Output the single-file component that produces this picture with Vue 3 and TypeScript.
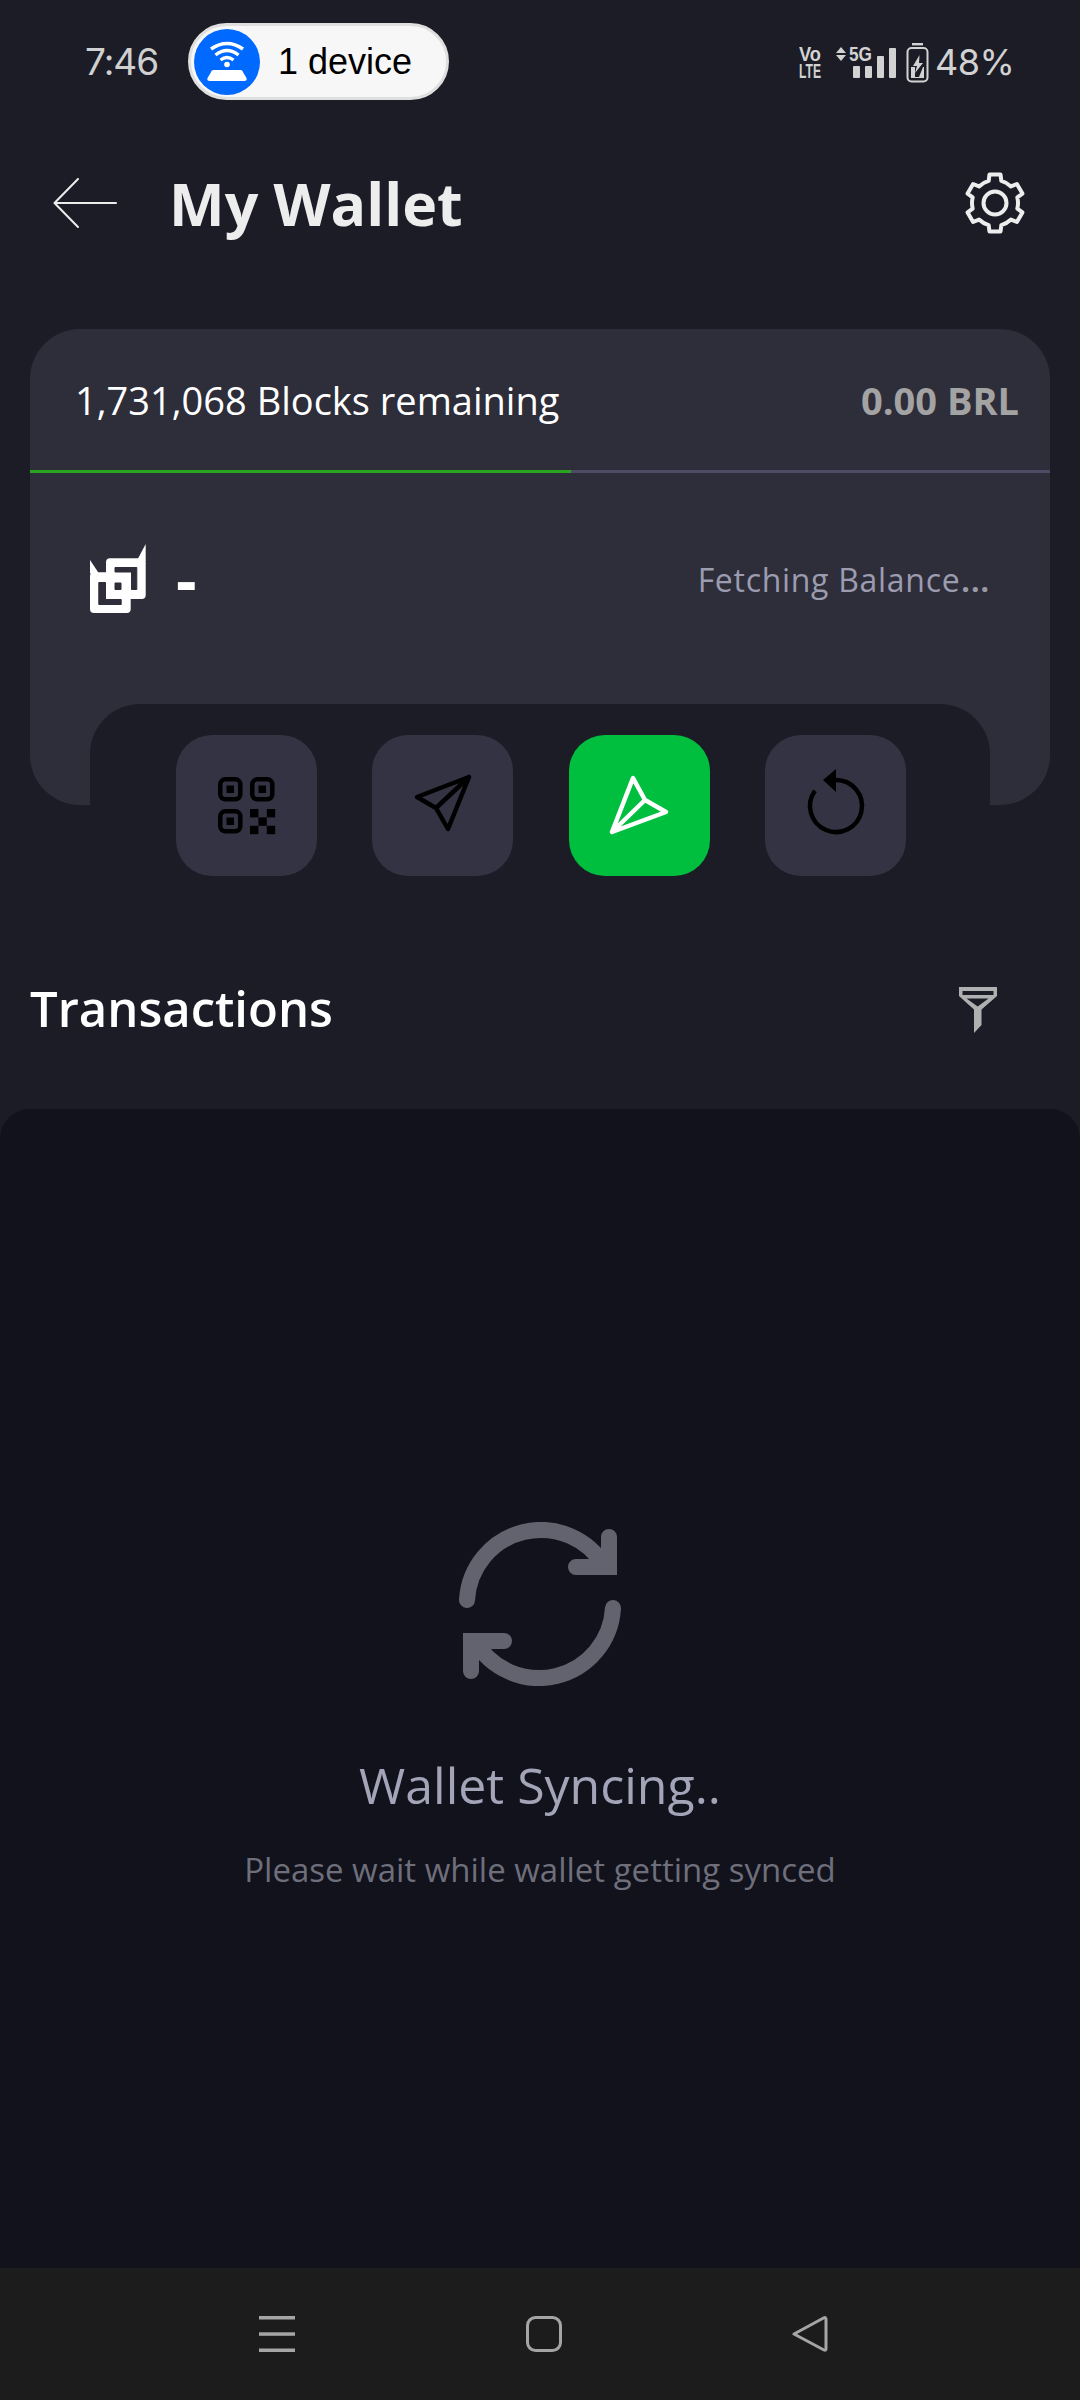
<script setup lang="ts">
function gearPath(cx: number, cy: number): string {
  const pts: string[] = []
  const p = (r: number, deg: number) => {
    const a = (deg * Math.PI) / 180
    return `${(cx + r * Math.cos(a)).toFixed(2)} ${(cy + r * Math.sin(a)).toFixed(2)}`
  }
  for (let i = 0; i < 6; i++) {
    const c = -90 + 60 * i
    pts.push(`${i === 0 ? 'M' : 'L'}${p(23, c - 16)}`)
    pts.push(`L${p(29, c - 11)}`)
    pts.push(`L${p(29, c + 11)}`)
    pts.push(`L${p(23, c + 16)}`)
    pts.push(`A23 23 0 0 1 ${p(23, c + 44)}`)
  }
  return pts.join(' ') + ' Z'
}
const gear = gearPath(31, 31)
const progress = 53
</script>

<template>
  <div class="screen">
    <div class="status">
      <div class="status-left">
        <span class="time">7:46</span>
        <div class="pill">
          <span class="pill-icon">
            <svg width="66" height="66" viewBox="0 0 66 66" fill="none">
              <path d="M17 20 Q33 9 49 20" stroke="#fff" stroke-width="3.6" />
              <path d="M21.500 26 Q33 17 44.500 26" stroke="#fff" stroke-width="3.4" />
              <path d="M26.500 31 Q33 26 39.500 31" stroke="#fff" stroke-width="3.2" />
              <circle cx="33" cy="35.500" r="2.800" fill="#fff" />
              <path d="M19 41 H47 Q48.500 41 49.500 44 L52.500 49 Q53.500 52 50 52 H16 Q12.500 52 13.500 49 L16.500 44 Q17.500 41 19 41 Z" fill="#fff" />
            </svg>
          </span>
          <span class="pill-text">1 device</span>
        </div>
      </div>
      <div class="status-right">
        <svg class="sys" width="130" height="42" viewBox="0 0 130 42">
          <text x="0" y="20" class="sys-text" textLength="22" lengthAdjust="spacingAndGlyphs">Vo</text>
          <text x="0" y="37" class="sys-text" textLength="22" lengthAdjust="spacingAndGlyphs">LTE</text>
          <path d="M42 6 L47 12 H37 Z M42 20 L47 14 H37 Z" fill="#d2d2d2" />
          <text x="50" y="20" class="sys-text" textLength="23" lengthAdjust="spacingAndGlyphs">5G</text>
          <rect x="54" y="25" width="7" height="12" rx="1" fill="#d2d2d2" />
          <rect x="66" y="25" width="7" height="12" rx="1" fill="#d2d2d2" />
          <rect x="78" y="15" width="7" height="22" rx="1" fill="#d2d2d2" />
          <rect x="90" y="7" width="7" height="30" rx="1" fill="#d2d2d2" />
          <rect x="113" y="2" width="11" height="2.400" fill="#d2d2d2" />
          <rect x="108.500" y="7" width="20" height="33.500" rx="4" fill="none" stroke="#d2d2d2" stroke-width="2" />
          <path d="M120.500 14 L114 25 H118 L116 32 L124 22 H120 Z" fill="#d2d2d2" />
          <path d="M112 26 V37 H125 V26 H124 L120 36 H116 V26 Z" fill="#d2d2d2" />
        </svg>
        <span class="battery">48%</span>
      </div>
    </div>

    <header class="header">
      <div class="header-left">
        <svg class="back" width="64" height="50" viewBox="0 0 64 50" fill="none">
          <path d="M63 25 H2 M25 1 L1.500 25 L25 49" stroke="#ececec" stroke-width="2" stroke-linecap="round" stroke-linejoin="round" />
        </svg>
        <h1 class="title">My Wallet</h1>
      </div>
      <svg class="gear" width="62" height="62" viewBox="0 0 62 62" fill="none">
        <path :d="gear" stroke="#ededed" stroke-width="4" stroke-linejoin="round" />
        <circle cx="31" cy="31" r="11.500" stroke="#ededed" stroke-width="4" />
      </svg>
    </header>

    <section class="card">
      <div class="card-top">
        <span class="blocks">1,731,068 Blocks remaining</span>
        <span class="fiat">0.00 BRL</span>
      </div>
      <div class="progress">
        <div class="progress-fill" :style="{ width: progress + '%' }"></div>
      </div>
      <div class="card-body">
        <div class="coin">
          <svg width="56" height="70" viewBox="0 0 56 70">
            <g fill="#fff">
              <rect x="0" y="28.300" width="40.700" height="40.700" rx="4" />
              <rect x="16" y="14.300" width="39.700" height="40.700" rx="4" />
              <path d="M0 16 L9 29.500 H0 Z" />
              <path d="M55.700 0 V17 H46.700 Z" />
            </g>
            <g fill="#2e2d3a" stroke="#2e2d3a" stroke-width="1" stroke-linejoin="round">
              <path d="M25 23.500 H46.800 V45.500 H41.500 V28 H25 Z" />
              <path d="M8.800 38.500 H15.500 V55.500 H31.200 V60.500 H8.800 Z" />
              <path d="M25 39 H31 V45.500 H25 Z" />
            </g>
          </svg>
          <span class="dash">-</span>
        </div>
        <div class="fetching">Fetching Balance<span class="dots">...</span></div>
      </div>
      <div class="tray">
        <button class="action" type="button">
          <svg width="141" height="141" viewBox="0 0 141 141" fill="none">
            <g stroke="#000" stroke-width="4.500">
              <rect x="44.300" y="44.300" width="20" height="20" rx="5" />
              <rect x="76.300" y="44.300" width="20" height="20" rx="5" />
              <rect x="44.300" y="76.300" width="20" height="20" rx="5" />
            </g>
            <g fill="#000">
              <rect x="50.500" y="50.500" width="7.500" height="7.500" />
              <rect x="82.500" y="50.500" width="7.500" height="7.500" />
              <rect x="50.500" y="82.500" width="7.500" height="7.500" />
              <rect x="74" y="74" width="8.400" height="8.400" />
              <rect x="90.800" y="74" width="8.400" height="8.400" />
              <rect x="82.400" y="82.400" width="8.400" height="8.400" />
              <rect x="74" y="90.800" width="8.400" height="8.400" />
              <rect x="90.800" y="90.800" width="8.400" height="8.400" />
            </g>
          </svg>
        </button>
        <button class="action" type="button">
          <svg width="141" height="141" viewBox="0 0 141 141" fill="none">
            <path d="M97 42 L45 62 L64 73 L76 94 Z M97 42 L64 73" stroke="#000" stroke-width="4.500" stroke-linejoin="round" stroke-linecap="round" />
          </svg>
        </button>
        <button class="action action-primary" type="button">
          <svg width="141" height="141" viewBox="0 0 141 141" fill="none">
            <path d="M43 97 L64 43 L76 65 L97 77 Z M43 97 L76 65" stroke="#fff" stroke-width="4.500" stroke-linejoin="round" stroke-linecap="round" />
          </svg>
        </button>
        <button class="action" type="button">
          <svg width="141" height="141" viewBox="0 0 141 141" fill="none">
            <path d="M71 45 A26 26 0 1 1 50 55.700" stroke="#000" stroke-width="4.500" />
            <path d="M71 34 V57 L58 45 Z" fill="#000" />
          </svg>
        </button>
      </div>
    </section>

    <div class="tx-head">
      <h2 class="tx-title">Transactions</h2>
      <svg class="filter" width="38" height="46" viewBox="0 0 38 46">
        <path fill="#b0b0b0" fill-rule="evenodd" d="M0 0 H38 V9 L22.500 22.500 V38 L15 46 V22.500 L0 9 Z M3.500 4 V8 H34.500 V4 Z M7.500 11.500 L18.700 19.500 L29.500 11.500 Z" />
      </svg>
    </div>

    <main class="panel">
      <svg class="sync" width="164" height="164" viewBox="0 0 164 164" fill="none">
        <g stroke="#62636e" stroke-width="16" stroke-linecap="round">
          <path d="M9 78 A74 74 0 0 1 147 45" />
          <path d="M151 15 V45 H118" stroke-linejoin="miter" />
          <path d="M155 86 A74 74 0 0 1 17 119" />
          <path d="M13 149 V119 H46" stroke-linejoin="miter" />
        </g>
      </svg>
      <h3 class="sync-title">Wallet Syncing..</h3>
      <p class="sync-sub">Please wait while wallet getting synced</p>
    </main>

    <nav class="nav">
      <svg width="36" height="36" viewBox="0 0 36 36" fill="#a5a5a5">
        <rect x="0" y="0" width="36" height="3.500" />
        <rect x="0" y="16.300" width="36" height="3.500" />
        <rect x="0" y="32.500" width="36" height="3.500" />
      </svg>
      <svg width="36" height="36" viewBox="0 0 36 36" fill="none">
        <rect x="1.500" y="1.500" width="33" height="33" rx="8" stroke="#a5a5a5" stroke-width="3" />
      </svg>
      <svg width="36" height="36" viewBox="0 0 36 36" fill="none">
        <path d="M2 18 L32 1.800 Q34 1 34 3.500 V32.500 Q34 35 32 34 L2 18 Z" stroke="#a5a5a5" stroke-width="3" stroke-linejoin="round" />
      </svg>
    </nav>
  </div>
</template>

<style>
html,
body {
  margin: 0;
  background: #1c1c27;
}
</style>

<style scoped>
.screen {
  width: 1080px;
  height: 2400px;
  display: flex;
  flex-direction: column;
  background: #1c1c27;
  font-family: "Open Sans", sans-serif;
  overflow: hidden;
}
.status {
  height: 77px;
  margin-top: 23px;
  padding: 0 67px 0 85px;
  display: flex;
  align-items: center;
  justify-content: space-between;
  font-family: Inter, "Liberation Sans", sans-serif;
  flex-shrink: 0;
}
.status-left {
  display: flex;
  align-items: center;
  gap: 30px;
}
.time {
  font-size: 37px;
  color: #d0d0d0;
  width: 73px;
  letter-spacing: -1px;
}
.pill {
  width: 261px;
  height: 77px;
  box-sizing: border-box;
  border: 3px solid #dfdfdf;
  border-radius: 39px;
  background: #f7f7f7;
  display: flex;
  align-items: center;
  padding-left: 3px;
  gap: 18px;
}
.pill-icon {
  width: 66px;
  height: 66px;
  border-radius: 50%;
  background: #0069ff;
  display: block;
}
.pill-icon svg {
  display: block;
}
.pill-text {
  font-size: 36px;
  color: #000;
  font-family: "Liberation Sans", Arial, sans-serif;
}
.status-right {
  display: flex;
  align-items: center;
  gap: 6px;
}
.sys {
  display: block;
}
.sys-text {
  font-family: "Liberation Sans", Arial, sans-serif;
  font-weight: 700;
  font-size: 20px;
  fill: #d2d2d2;
}
.battery {
  font-size: 36px;
  color: #d2d2d2;
  width: 78px;
  white-space: nowrap;
  letter-spacing: -0.5px;
}
.header {
  height: 206px;
  padding: 0 54px 0 53px;
  display: flex;
  align-items: center;
  justify-content: space-between;
  flex-shrink: 0;
}
.header-left {
  display: flex;
  align-items: center;
  gap: 52px;
}
.back,
.gear {
  display: block;
}
.title {
  margin: 0;
  font-size: 59px;
  font-weight: 700;
  color: #ededed;
  line-height: 80px;
}
.card {
  margin: 23px 30px 0;
  height: 476px;
  display: flex;
  flex-direction: column;
  background: #2e2d3a;
  border-radius: 50px;
  flex-shrink: 0;
}
.card-top {
  height: 141px;
  padding: 0 31px 0 45px;
  display: flex;
  align-items: center;
  justify-content: space-between;
}
.blocks {
  font-size: 38px;
  color: #fff;
}
.fiat {
  font-size: 38px;
  font-weight: 700;
  color: #a3a3a3;
}
.progress {
  height: 3px;
  background: #4e4b66;
}
.progress-fill {
  height: 100%;
  background: #2aa320;
}
.card-body {
  flex: 1;
  display: flex;
  align-items: center;
  justify-content: space-between;
  padding: 0 60px 20px 60px;
}
.coin {
  display: flex;
  align-items: center;
  gap: 30px;
}
.coin svg {
  display: block;
}
.dash {
  font-size: 64px;
  font-weight: 700;
  color: #fff;
  line-height: 70px;
}
.fetching {
  font-size: 32px;
  color: #9c9cb0;
  letter-spacing: 0.7px;
  margin-top: 2px;
}
.dots {
  font-weight: 700;
  font-size: 30px;
  color: #9a9aa6;
  letter-spacing: 1px;
  margin-left: 1px;
}
.tray {
  height: 101px;
  margin: 0 60px;
  padding: 31px 84px 0 86px;
  box-sizing: border-box;
  display: flex;
  justify-content: space-between;
  align-items: flex-start;
  background: #1c1c27;
  border-radius: 50px 50px 0 0;
}
.action {
  width: 141px;
  height: 141px;
  padding: 0;
  border: 0;
  border-radius: 36px;
  background: #343343;
  flex-shrink: 0;
}
.action svg {
  display: block;
}
.action-primary {
  background: #00bf3f;
}
.tx-head {
  margin-top: 106px;
  height: 198px;
  padding: 0 83px 4px 30px;
  box-sizing: border-box;
  display: flex;
  align-items: center;
  justify-content: space-between;
  flex-shrink: 0;
}
.tx-title {
  margin: 0;
  font-size: 49px;
  font-weight: 600;
  color: #fff;
}
.filter {
  display: block;
  margin-top: 4px;
}
.panel {
  flex: 1;
  display: flex;
  flex-direction: column;
  align-items: center;
  padding-top: 413px;
  background: #11121b;
  border-radius: 30px 30px 0 0;
}
.sync {
  display: block;
}
.sync-title {
  margin: 65px 0 0;
  font-size: 50px;
  line-height: 68px;
  font-weight: 400;
  color: #a4a4b8;
}
.sync-sub {
  margin: 29px 0 0;
  font-size: 33px;
  line-height: 44px;
  color: #6f6f7c;
}
.nav {
  height: 132px;
  padding: 0 252px 0 259px;
  display: flex;
  align-items: center;
  justify-content: space-between;
  background: #1c1c1c;
  flex-shrink: 0;
}
</style>
